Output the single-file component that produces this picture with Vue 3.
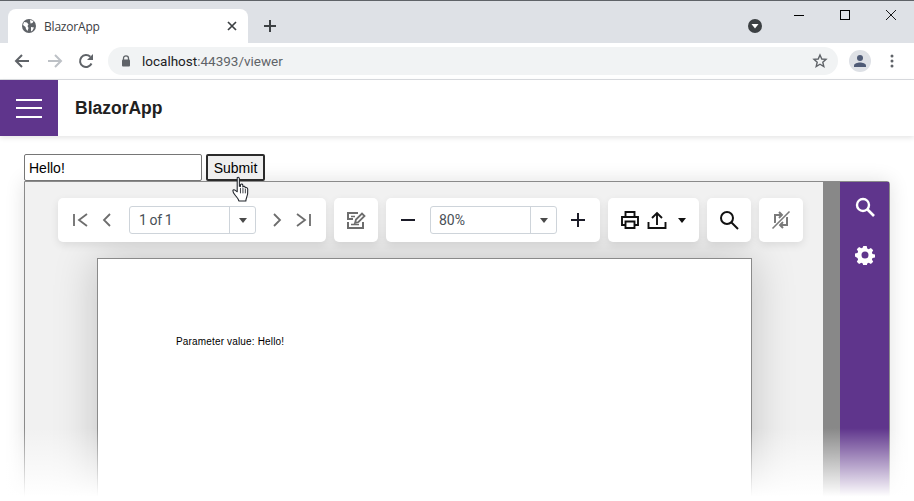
<script setup>
const pagerLeft = [
  { id: 'first', d: 'M2 3v12M15 3 7 9l8 6' },
  { id: 'prev', d: 'M12 3 6 9l6 6' }
]
const pagerRight = [
  { id: 'next', d: 'M6 3l6 6-6 6' },
  { id: 'last', d: 'M3 3l8 6-8 6M16 3v12' }
]
</script>

<template>
  <div class="app">
    <div class="tabstrip">
      <div class="tab">
        <svg class="globe" width="16" height="16" viewBox="0 0 16 16">
          <circle cx="8" cy="8" r="7" fill="#5f6368" />
          <path d="M3 4l3 .5 1.500 2-1 1.500 1 2-1 3-1.500-2-.5-2L2 7zM9 2l3.500 1-1 2-2 .5zM10 9l3 .5-1.500 3-1.500 1z" fill="#fff" />
        </svg>
        <span class="tab-title">BlazorApp</span>
        <svg class="tab-close" width="10" height="10" viewBox="0 0 10 10">
          <path d="M1 1l8 8M9 1 1 9" stroke="#3c4043" stroke-width="1.700" />
        </svg>
      </div>
      <svg class="new-tab" width="14" height="14" viewBox="0 0 14 14">
        <path d="M7 1v12M1 7h12" stroke="#3c4043" stroke-width="2" />
      </svg>
      <svg class="media" width="14" height="14" viewBox="0 0 14 14">
        <circle cx="7" cy="7" r="7" fill="#3c4043" />
        <path d="M3.500 5h7L7 9.500z" fill="#fff" />
      </svg>
      <div class="winctl">
        <svg width="10" height="10" viewBox="0 0 10 10"><path d="M0 5.500h10" stroke="#000" /></svg>
        <svg width="10" height="10" viewBox="0 0 10 10"><rect x=".5" y=".5" width="9" height="9" fill="none" stroke="#000" /></svg>
        <svg width="10" height="10" viewBox="0 0 10 10"><path d="M0 0l10 10M10 0 0 10" stroke="#000" stroke-width=".9" /></svg>
      </div>
    </div>

    <div class="browserbar">
      <svg class="nav" width="16" height="16" viewBox="0 0 16 16">
        <path d="M15 8H2M8 2 2 8l6 6" fill="none" stroke="#5f6368" stroke-width="2" />
      </svg>
      <svg class="nav" width="16" height="16" viewBox="0 0 16 16">
        <path d="M1 8h13M8 2l6 6-6 6" fill="none" stroke="#bdc1c6" stroke-width="2" />
      </svg>
      <svg class="nav reload" width="16" height="16" viewBox="0 0 16 16">
        <path d="M13.500 10.500A6 6 0 1 1 12.300 3.800" fill="none" stroke="#5f6368" stroke-width="2" />
        <path d="M15 1v6H9z" fill="#5f6368" />
      </svg>
      <div class="omnibox">
        <svg class="lock" width="10" height="12" viewBox="0 0 10 12">
          <path d="M2.500 5V3.300a2.500 2.500 0 0 1 5 0V5" fill="none" stroke="#5f6368" stroke-width="1.300" />
          <rect x="1" y="4.500" width="8" height="7" rx="1" fill="#5f6368" />
        </svg>
        <span class="url">localhost<span class="url-dim">:44393/viewer</span></span>
        <svg class="star" width="16" height="16" viewBox="0 0 16 16">
          <path d="M8 2l1.800 4 4.200.4-3.200 2.800 1 4.300L8 11.200l-3.800 2.300 1-4.300L2 6.400 6.200 6z" fill="none" stroke="#5f6368" stroke-width="1.400" />
        </svg>
      </div>
      <div class="avatar">
        <svg width="14" height="14" viewBox="0 0 14 14">
          <circle cx="7" cy="4" r="3" fill="#4f5b76" />
          <path d="M1 13v-1.500C1 9.500 4.500 8.500 7 8.500s6 1 6 3V13z" fill="#4f5b76" />
        </svg>
      </div>
      <svg class="dots" width="4" height="14" viewBox="0 0 4 14">
        <circle cx="2" cy="2" r="1.500" fill="#5f6368" />
        <circle cx="2" cy="7" r="1.500" fill="#5f6368" />
        <circle cx="2" cy="12" r="1.500" fill="#5f6368" />
      </svg>
    </div>

    <header class="appbar">
      <div class="burger"><i></i><i></i><i></i></div>
      <div class="brand">BlazorApp</div>
    </header>

    <main class="content">
      <form class="param-form" @submit.prevent>
        <input class="param-input" value="Hello!" />
        <button class="param-submit" type="button">Submit</button>
      </form>

      <section class="viewer">
        <div class="viewer-main">
          <div class="tools">
            <div class="group pager">
              <button v-for="b in pagerLeft" :key="b.id" class="tb" type="button">
                <svg width="18" height="18" viewBox="0 0 18 18"><path :d="b.d" fill="none" stroke="#6d6d6d" stroke-width="1.800" /></svg>
              </button>
              <div class="combo combo-page">
                <span class="combo-text">1 of 1</span>
                <span class="combo-btn"><b class="caret"></b></span>
              </div>
              <button v-for="b in pagerRight" :key="b.id" class="tb" type="button">
                <svg width="18" height="18" viewBox="0 0 18 18"><path :d="b.d" fill="none" stroke="#6d6d6d" stroke-width="1.800" /></svg>
              </button>
            </div>

            <div class="group single">
              <svg width="20" height="20" viewBox="0 0 20 20">
                <path d="M12 3H2v6h5M2 12v6h15v-6" fill="none" stroke="#6d6d6d" stroke-width="2" />
                <path d="M5 6.500h4M5 14.500h8" stroke="#6d6d6d" stroke-width="1.500" />
                <path d="M9 13l1-3.500L16 3.500 18.500 6l-6 6z" fill="none" stroke="#6d6d6d" stroke-width="1.800" />
              </svg>
            </div>

            <div class="group zoomer">
              <svg width="14" height="14" viewBox="0 0 14 14"><path d="M0 7h14" stroke="#1c1c28" stroke-width="2" /></svg>
              <div class="combo combo-zoom">
                <span class="combo-text">80%</span>
                <span class="combo-btn"><b class="caret"></b></span>
              </div>
              <svg width="14" height="14" viewBox="0 0 14 14"><path d="M0 7h14M7 0v14" stroke="#1c1c28" stroke-width="2" /></svg>
            </div>

            <div class="group output">
              <svg width="20" height="20" viewBox="0 0 20 20">
                <path d="M5.500 7V2h9v5M5 15H2V7h16v8h-3M5.500 11.500h9V18h-9z" fill="none" stroke="#111" stroke-width="1.900" />
              </svg>
              <svg class="export" width="20" height="20" viewBox="0 0 20 20">
                <path d="M1.500 12v6h17v-6M10 15V3M5 8l5-5 5 5" fill="none" stroke="#111" stroke-width="1.900" />
              </svg>
              <b class="caret dark"></b>
            </div>

            <div class="group single">
              <svg width="20" height="20" viewBox="0 0 20 20">
                <circle cx="8" cy="8" r="6" fill="none" stroke="#111" stroke-width="2" />
                <path d="M12.500 12.500 19 19" stroke="#111" stroke-width="2" />
              </svg>
            </div>

            <div class="group single">
              <svg width="20" height="20" viewBox="0 0 20 20">
                <path d="M4 13V5h7M8 2l3 3-3 3M16 7v8H9M12 12l-3 3 3 3" fill="none" stroke="#7a7a7a" stroke-width="2" />
                <path d="M1.500 18.500 18.500 1.500" stroke="#fff" stroke-width="3.600" />
                <path d="M1.500 18.500 18.500 1.500" stroke="#7a7a7a" stroke-width="1.600" />
              </svg>
            </div>
          </div>

          <article class="page">
            <p class="page-text">Parameter value: Hello!</p>
          </article>
        </div>

        <div class="scrollbar"></div>

        <aside class="sidebar">
          <svg width="20" height="20" viewBox="0 0 20 20">
            <circle cx="8" cy="8" r="6" fill="none" stroke="#fff" stroke-width="2.400" />
            <path d="M12.500 12.500 19 19" stroke="#fff" stroke-width="2.600" />
          </svg>
          <svg width="20" height="20" viewBox="0 0 20 20">
            <path fill="#fff" fill-rule="evenodd" d="M8.300 1h3.400l.5 2.500 1.500.7 2.200-1.300 2.300 2.400-1.300 2.100.6 1.600 2.500.5v3l-2.500.6-.6 1.500 1.300 2.200-2.300 2.300-2.200-1.300-1.500.6-.5 2.600H8.300l-.5-2.600-1.500-.6-2.200 1.300-2.300-2.300 1.300-2.200-.6-1.500L0 11.500v-3l2.500-.5.6-1.600-1.300-2.100 2.300-2.400 2.200 1.300 1.500-.7zM10 6.500a3.500 3.500 0 1 0 0 7 3.500 3.500 0 0 0 0-7z" />
          </svg>
        </aside>
      </section>
    </main>

    <div class="fade"></div>

    <svg class="cursor" width="20" height="26" viewBox="0 0 17 24">
      <path d="M5 1.500c1-.8 2 0 2 1v7l1 .1V8c1-1 2-.5 2.200.5V10c1-1 2-.5 2.200.4v.6c1-.7 2.200-.2 2.300 1 .3 3.500 0 6-1.200 8.500-.3.800-.5 1.500-.5 2.500H6.500c-.3-2-2-3.500-3.500-5.500-1-1.300-2-3-2-4 .2-1 1.500-1 2.500 0L5 14.500z" fill="#fff" stroke="#20242b" stroke-width="1" stroke-linejoin="round" />
      <path d="M8 11v5M10.300 11v5M12.500 12v4" stroke="#20242b" stroke-width=".8" />
    </svg>
  </div>
</template>

<style scoped>
.app {
  position: relative;
  width: 914px;
  height: 501px;
  overflow: hidden;
  background: #fff;
  font-family: "Liberation Sans", Arial, sans-serif;
}
.tabstrip {
  box-sizing: border-box;
  height: 43px;
  border-top: 1px solid #5f6368;
  background: #dee1e6;
  display: flex;
  align-items: flex-end;
  padding-left: 8px;
}
.tab {
  box-sizing: border-box;
  width: 240px;
  height: 34px;
  background: #fff;
  border-radius: 8px 8px 0 0;
  display: flex;
  align-items: center;
  padding: 0 11px 0 13px;
}
.globe { flex: none; }
.tab-title {
  margin-left: 7px;
  flex: 1;
  font: 12px "Open Sans", sans-serif;
  color: #3c4043;
  letter-spacing: -.2px;
}
.new-tab { margin: 0 0 10px 15px; }
.media { margin: 0 0 10px 471px; }
.winctl {
  margin-left: 32px;
  align-self: flex-start;
  padding-top: 9px;
  display: flex;
  gap: 36px;
}
.browserbar {
  box-sizing: border-box;
  height: 37px;
  border-bottom: 1px solid #dadce0;
  display: flex;
  align-items: center;
  padding: 0 0 1px 14px;
}
.nav { margin-right: 17px; }
.reload { margin-left: -2px; }
.omnibox {
  box-sizing: border-box;
  width: 730px;
  height: 28px;
  margin-left: -3px;
  border-radius: 14px;
  background: #f1f3f4;
  display: flex;
  align-items: center;
  padding: 0 10px 0 13px;
}
.url {
  margin-left: 11px;
  flex: 1;
  font: 13.500px Roboto, sans-serif;
  color: #202124;
}
.url-dim { color: #5f6368; }
.avatar {
  width: 22px;
  height: 22px;
  margin-left: 11px;
  border-radius: 50%;
  background: #dee1e6;
  display: flex;
  align-items: center;
  justify-content: center;
}
.dots { margin-left: 19px; }
.appbar {
  position: relative;
  height: 56px;
  display: flex;
  align-items: center;
  box-shadow: 0 2px 5px rgba(0, 0, 0, .1);
}
.burger {
  box-sizing: border-box;
  width: 58px;
  height: 56px;
  background: #5f358c;
  display: flex;
  flex-direction: column;
  justify-content: center;
  gap: 6.500px;
  padding: 0 16px;
}
.burger i {
  display: block;
  height: 2px;
  background: #fff;
}
.brand {
  margin-left: 17px;
  font-size: 17.500px;
  font-weight: 700;
  color: #212121;
}
.content { padding: 18px 24px 0; }
.param-form {
  display: flex;
  gap: 4px;
  height: 27px;
}
.param-input {
  box-sizing: border-box;
  width: 178px;
  height: 27px;
  padding: 0 4px;
  border: 1px solid #767676;
  border-radius: 2px;
  font: 14px "Liberation Sans", Arial, sans-serif;
  color: #000;
  outline: none;
}
.param-submit {
  box-sizing: border-box;
  width: 59px;
  height: 27px;
  padding: 0;
  border: 2px solid #2b2b2b;
  border-radius: 2px;
  background: #efefef;
  font: 14px "Liberation Sans", Arial, sans-serif;
  color: #000;
}
.viewer {
  display: flex;
  width: 866px;
  height: 340px;
  box-sizing: border-box;
  border: 1px solid #8a8a8a;
  border-radius: 0 3px 0 0;
  box-shadow: 0 0 20px rgba(0, 0, 0, .12);
}
.viewer-main {
  flex: 1;
  min-width: 0;
  background: #f1f1f1;
  overflow: hidden;
}
.tools {
  display: flex;
  gap: 8px;
  padding: 16px 0 0 33px;
}
.group {
  height: 44px;
  background: #fff;
  border-radius: 5px;
  display: flex;
  align-items: center;
  box-shadow: 0 3px 8px rgba(0, 0, 0, .09);
}
.pager { width: 268px; padding-left: 11px; box-sizing: border-box; }
.tb {
  width: 24px;
  height: 24px;
  padding: 0;
  margin-right: 2px;
  border: 0;
  background: none;
  display: flex;
  align-items: center;
  justify-content: center;
}
.combo {
  box-sizing: border-box;
  width: 127px;
  height: 28px;
  border: 1px solid #ced4da;
  border-radius: 3px;
  display: flex;
  align-items: center;
  background: #fff;
}
.combo-page { margin: 0 9px 0 8px; }
.combo-text {
  flex: 1;
  padding-left: 8px;
  font: 14px Roboto, sans-serif;
  color: #495057;
}
.combo-page .combo-text { padding-left: 9px; letter-spacing: -.4px; }
.combo-btn {
  width: 25px;
  height: 100%;
  border-left: 1px solid #ced4da;
  display: flex;
  align-items: center;
  justify-content: center;
}
.caret {
  display: block;
  width: 0;
  height: 0;
  border-left: 4.500px solid transparent;
  border-right: 4.500px solid transparent;
  border-top: 5px solid #4a4a4a;
}
.caret.dark { border-top-color: #111; margin-left: 11px; }
.single { width: 44px; justify-content: center; }
.zoomer {
  box-sizing: border-box;
  width: 214px;
  padding: 0 15px;
  justify-content: space-between;
}
.zoomer .combo { margin-left: 1px; }
.output {
  box-sizing: border-box;
  width: 91px;
  padding-left: 12px;
}
.export { margin-left: 7px; }
.page {
  box-sizing: border-box;
  width: 655px;
  height: 300px;
  margin: 16px 0 0 72px;
  background: #fff;
  border: 1px solid #8a8a8a;
  box-shadow: 0 0 42px rgba(0, 0, 0, .2);
  padding: 77px 0 0 78px;
}
.page-text {
  margin: 0;
  font-size: 10px;
  letter-spacing: .16px;
  line-height: 12px;
  color: #000;
}
.scrollbar {
  width: 17px;
  flex: none;
  background: #888;
}
.sidebar {
  width: 49px;
  flex: none;
  background: #5f358c;
  display: flex;
  flex-direction: column;
  align-items: center;
  gap: 28px;
  padding-top: 15px;
  box-sizing: border-box;
}
.fade {
  position: absolute;
  left: 0;
  right: 0;
  top: 428px;
  height: 73px;
  background: linear-gradient(to bottom, rgba(255, 255, 255, 0), #fff 94%);
}
.cursor {
  position: absolute;
  left: 231px;
  top: 176px;
}
</style>
